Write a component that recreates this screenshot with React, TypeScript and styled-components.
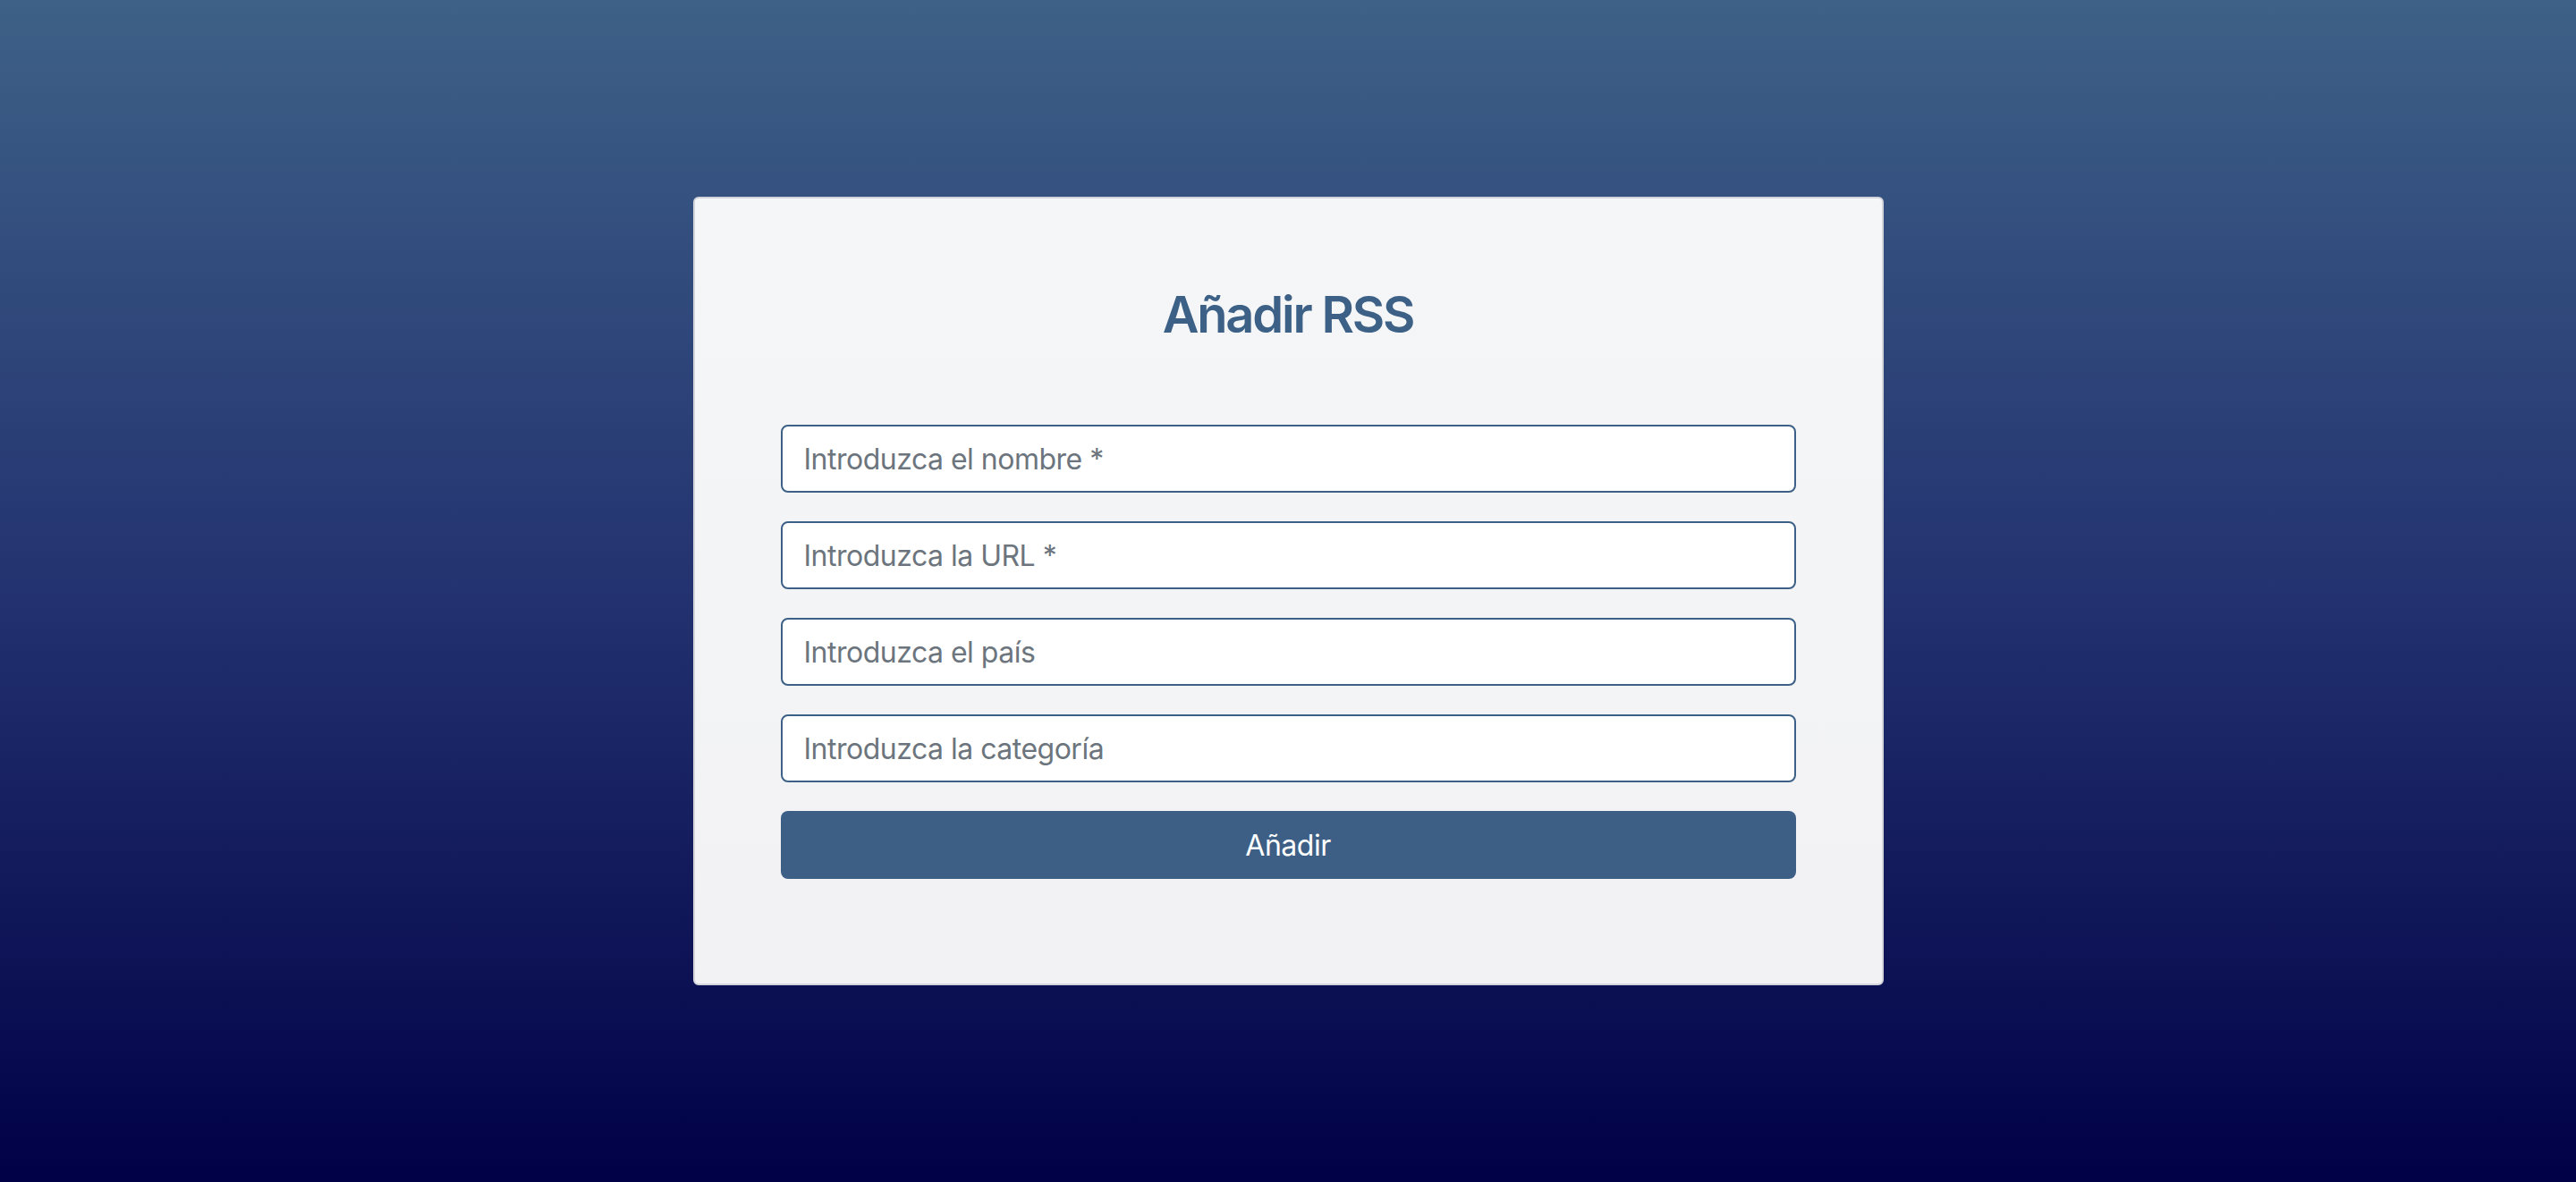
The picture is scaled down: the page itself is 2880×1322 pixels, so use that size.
import React from 'react';
import styled, { createGlobalStyle } from 'styled-components';

const GlobalStyle = createGlobalStyle`
  * {
    box-sizing: border-box;
  }

  body {
    margin: 0;
    font-family: Inter, "Noto Sans", sans-serif;
  }
`;

const fields = [
  { id: 'name', placeholder: 'Introduzca el nombre *' },
  { id: 'url', placeholder: 'Introduzca la URL *' },
  { id: 'country', placeholder: 'Introduzca el país' },
  { id: 'category', placeholder: 'Introduzca la categoría' },
];

const App = () => {
  return (
    <Page>
      <GlobalStyle />
      <Card>
        <Title>Añadir RSS</Title>
        <Form onSubmit={(e) => e.preventDefault()}>
          {fields.map(({ id, placeholder }) => (
            <Input key={id} name={id} type="text" placeholder={placeholder} />
          ))}
          <SubmitButton type="submit">Añadir</SubmitButton>
        </Form>
      </Card>
    </Page>
  );
};

const Page = styled.div`
  min-height: 100vh;
  display: flex;
  align-items: center;
  justify-content: center;
  background: linear-gradient(180deg, #3e6187 0%, #233270 50%, #000046 100%);
`;

const Card = styled.div`
  width: 1331px;
  padding: 95px 96px 117px;
  background: linear-gradient(180deg, #f5f6f8 0%, #f2f2f5 100%);
  border: 2px solid #d3d4da;
  border-radius: 6px;
`;

const Title = styled.h2`
  margin: 0 0 88px;
  height: 70px;
  font-size: 56px;
  line-height: 70px;
  font-weight: 600;
  letter-spacing: -2.2px;
  text-align: center;
  color: #3d6186;
`;

const Form = styled.form`
  display: flex;
  flex-direction: column;
  gap: 32px;
`;

const Input = styled.input`
  width: 100%;
  height: 76px;
  padding: 0 24px;
  border: 2px solid #3d6186;
  border-radius: 8px;
  background: #fff;
  font-family: Inter, "Noto Sans", sans-serif;
  font-size: 32px;
  letter-spacing: -0.5px;
  color: #495057;
  outline: none;

  &::placeholder {
    color: #6c757d;
  }
`;

const SubmitButton = styled.button`
  width: 100%;
  height: 76px;
  border: none;
  border-radius: 8px;
  background: #3d5f85;
  color: #fff;
  font-family: Inter, "Noto Sans", sans-serif;
  font-size: 32px;
  letter-spacing: -0.5px;
  cursor: pointer;
`;

export default App;
